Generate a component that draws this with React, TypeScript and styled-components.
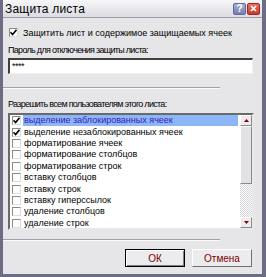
import React from "react";
import styled, { createGlobalStyle } from "styled-components";

const Global = createGlobalStyle`
  html, body { margin: 0; padding: 0; background: #e6e5e8; }
  #root { width: 266px; height: 277px; }
`;

const Dialog = styled.div`
  width: 266px;
  height: 277px;
  box-sizing: border-box;
  display: flex;
  flex-direction: column;
  background: #e6e5e8;
  border-left: 3px solid #6c6c84;
  border-right: 4px solid #6c6c84;
  border-bottom: 3px solid #6c6c84;
  font-family: "Liberation Sans", Arial, sans-serif;
  font-size: 9px;
  color: #000;
  overflow: hidden;
`;

const TitleBar = styled.div`
  height: 17px;
  flex: none;
  display: flex;
  align-items: center;
  padding: 0 2px 0 2px;
  background: linear-gradient(#f6f6f8, #dcdce2);
  border-bottom: 1px solid #9a9aa8;
`;

const Title = styled.div`
  flex: 1;
  font-size: 12px;
  letter-spacing: 0.2px;
`;

const TitleButton = styled.div<{ $red?: boolean }>`
  width: 13px;
  height: 12px;
  margin-left: 1px;
  border-radius: 2px;
  display: flex;
  align-items: center;
  justify-content: center;
  color: #fff;
  font-size: 10px;
  font-weight: bold;
  background: ${(p) =>
    p.$red ? "linear-gradient(#e87060, #c83a30)" : "linear-gradient(#a8b0d0, #7880a8)"};
  border: 1px solid ${(p) => (p.$red ? "#a02820" : "#6068a0")};
  box-sizing: border-box;
`;

const Body = styled.div`
  flex: 1;
  display: flex;
  flex-direction: column;
  padding: 0 8px 0 5px;
`;

const CheckRow = styled.div`
  margin-top: 9px;
  height: 11px;
  display: flex;
  align-items: center;
  padding-left: 1px;
  gap: 5px;
  white-space: nowrap;
`;

const Box = styled.div`
  width: 9px;
  height: 9px;
  flex: none;
  box-sizing: border-box;
  background: #fff;
  border: 1px solid #8a8a8a;
  border-right-color: #dcdcdc;
  border-bottom-color: #dcdcdc;
  display: flex;
  align-items: center;
  justify-content: center;
`;

const Label = styled.div<{ $mt: number }>`
  margin-top: ${(p) => p.$mt}px;
  height: 12px;
  line-height: 12px;
  white-space: nowrap;
  letter-spacing: -0.7px;
`;

const Input = styled.div`
  margin-top: 2px;
  margin-right: 1px;
  height: 16px;
  box-sizing: border-box;
  background: #fff;
  border-top: 2px solid #404040;
  border-left: 2px solid #404040;
  border-right: 1px solid #f0f0f0;
  border-bottom: 1px solid #f0f0f0;
  padding-left: 2px;
  font-size: 9px;
  line-height: 12px;
  letter-spacing: -0.5px;
`;

const Separator = styled.div<{ $mt: number }>`
  margin-top: ${(p) => p.$mt}px;
  margin-left: -5px;
  width: 217px;
  height: 1px;
  background: #a0a0a8;
  border-bottom: 1px solid #fafafa;
`;

const List = styled.div`
  margin-top: 3px;
  height: 117px;
  box-sizing: border-box;
  background: #fff;
  border-top: 2px solid #6a6a6a;
  border-left: 2px solid #6a6a6a;
  border-right: 2px solid #e8e8ec;
  border-bottom: 2px solid #e8e8ec;
  display: flex;
  overflow: hidden;
`;

const Items = styled.div`
  flex: 1;
  display: flex;
  flex-direction: column;
  overflow: hidden;
`;

const Item = styled.div`
  height: 11.4px;
  flex: none;
  display: flex;
  align-items: center;
  padding-left: 2px;
  gap: 2px;
  white-space: nowrap;
`;

const ItemText = styled.div<{ $sel?: boolean }>`
  flex: 1;
  height: 11px;
  line-height: 11px;
  margin-right: 2px;
  padding-left: 1px;
  background: ${(p) => (p.$sel ? "#8cb6f6" : "transparent")};
  color: ${(p) => (p.$sel ? "#3a1ab8" : "#000")};
`;

const Scroll = styled.div`
  width: 12px;
  flex: none;
  display: flex;
  flex-direction: column;
`;

const Arrow = styled.div`
  height: 11px;
  flex: none;
  box-sizing: border-box;
  background: #ececee;
  border: 1px solid #fff;
  border-right-color: #8a8a8a;
  border-bottom-color: #8a8a8a;
  display: flex;
  align-items: center;
  justify-content: center;
`;

const Thumb = styled.div`
  height: 58px;
  flex: none;
  box-sizing: border-box;
  background: #e2e2e6;
  border: 1px solid #fff;
  border-right-color: #8a8a8a;
  border-bottom-color: #8a8a8a;
`;

const Track = styled.div`
  flex: 1;
  background-image: conic-gradient(#fff 25%, #d4d4d8 0 50%, #fff 0 75%, #d4d4d8 0);
  background-size: 2px 2px;
`;

const Buttons = styled.div`
  margin-top: 8px;
  margin-right: 2px;
  display: flex;
  justify-content: flex-end;
  gap: 7px;
`;

const Button = styled.div<{ $def?: boolean }>`
  width: 60px;
  height: 18px;
  box-sizing: border-box;
  display: flex;
  align-items: center;
  justify-content: center;
  color: #800000;
  background: #ececee;
  border: 1px solid ${(p) => (p.$def ? "#000" : "#fff")};
  ${(p) => (p.$def ? "" : "border-right-color: #707070; border-bottom-color: #707070;")}
  box-shadow: ${(p) => (p.$def ? "inset 1px 1px #fff, inset -1px -1px #808080" : "none")};
  font-size: 10px;
`;

const Check = () => (
  <svg width="7" height="7" viewBox="0 0 7 7">
    <path d="M0.5 3.2 L2.6 5.6 L6.5 0.8" fill="none" stroke="#000" strokeWidth="1.6" />
  </svg>
);

const items: { t: string; c: boolean; sel?: boolean }[] = [
  { t: "выделение заблокированных ячеек", c: true, sel: true },
  { t: "выделение незаблокированных ячеек", c: true },
  { t: "форматирование ячеек", c: false },
  { t: "форматирование столбцов", c: false },
  { t: "форматирование строк", c: false },
  { t: "вставку столбцов", c: false },
  { t: "вставку строк", c: false },
  { t: "вставку гиперссылок", c: false },
  { t: "удаление столбцов", c: false },
  { t: "удаление строк", c: false },
];

export default function App() {
  return (
    <>
      <Global />
      <Dialog>
        <TitleBar>
          <Title>Защита листа</Title>
          <TitleButton>?</TitleButton>
          <TitleButton $red>
            <svg width="7" height="7" viewBox="0 0 7 7">
              <path d="M1 1 L6 6 M6 1 L1 6" stroke="#fff" strokeWidth="1.6" />
            </svg>
          </TitleButton>
        </TitleBar>
        <Body>
          <CheckRow>
            <Box>
              <Check />
            </Box>
            Защитить лист и содержимое защищаемых ячеек
          </CheckRow>
          <Label $mt={6}>Пароль для отключения защиты листа:</Label>
          <Input>****</Input>
          <Separator $mt={13} />
          <Label $mt={9}>Разрешить всем пользователям этого листа:</Label>
          <List>
            <Items>
              {items.map((it) => (
                <Item key={it.t}>
                  <Box>{it.c && <Check />}</Box>
                  <ItemText $sel={it.sel}>{it.t}</ItemText>
                </Item>
              ))}
            </Items>
            <Scroll>
              <Arrow>
                <svg width="5" height="3" viewBox="0 0 5 3">
                  <path d="M0 3 L2.5 0 L5 3 Z" fill="#800000" />
                </svg>
              </Arrow>
              <Thumb />
              <Track />
              <Arrow>
                <svg width="5" height="3" viewBox="0 0 5 3">
                  <path d="M0 0 L2.5 3 L5 0 Z" fill="#800000" />
                </svg>
              </Arrow>
            </Scroll>
          </List>
          <Separator $mt={9} />
          <Buttons>
            <Button $def>ОК</Button>
            <Button>Отмена</Button>
          </Buttons>
        </Body>
      </Dialog>
    </>
  );
}
